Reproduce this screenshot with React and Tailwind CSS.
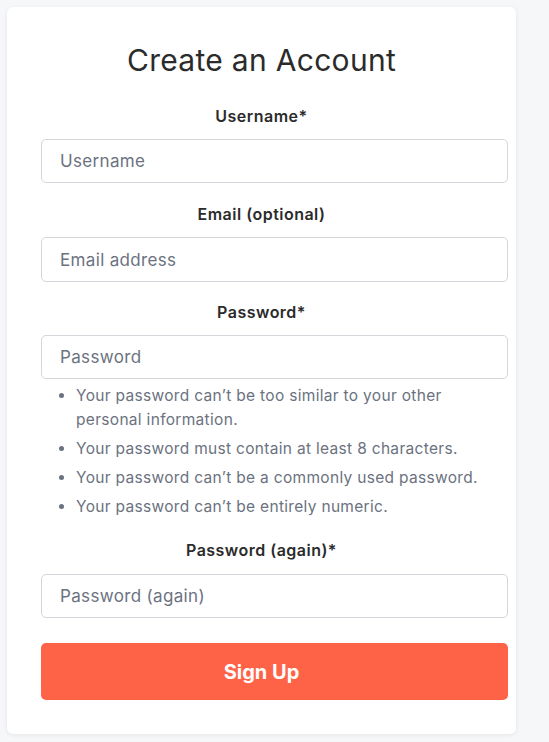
export default function App() {
  const font = { fontFamily: "Inter, 'Noto Sans', sans-serif" };
  const inputCls =
    "w-[467px] rounded-[5px] border border-[#d3d6db] px-[18px] text-[17px] tracking-[0.02em] text-[#374151] placeholder:text-[#6b7280] focus:outline-none";
  const labelCls =
    "text-center text-[16px] leading-6 font-semibold tracking-[0.03em] text-[#2b2b2b]";
  return (
    <div className="min-h-screen bg-[#f6f7f9] p-[7px]" style={font}>
      <div className="w-[509px] rounded-md bg-white px-[34px] pt-[35px] pb-[34px] shadow-[0_1px_4px_rgba(0,0,0,0.08)]">
        <h1 className="text-center text-[30px] leading-[36px] font-normal tracking-[0.01em] text-[#2b2b2b]">
          Create an Account
        </h1>

        <form className="mt-[26px] flex flex-col">
          {/* Username */}
          <label className={labelCls}>Username*</label>
          <input
            type="text"
            placeholder="Username"
            className={`mt-[11px] h-[44px] ${inputCls}`}
          />

          {/* Email */}
          <label className={`mt-[19px] ${labelCls}`}>Email (optional)</label>
          <input
            type="email"
            placeholder="Email address"
            className={`mt-[11px] h-[45px] ${inputCls}`}
          />

          {/* Password */}
          <label className={`mt-[18px] ${labelCls}`}>Password*</label>
          <input
            type="password"
            placeholder="Password"
            className={`mt-[11px] h-[44px] ${inputCls}`}
          />
          <ul className="mt-[5px] list-disc pl-[35px] text-[15.5px] leading-6 tracking-[0.02em] text-[#6b7280] marker:text-[#6b7280]">
            <li>Your password can’t be too similar to your other personal information.</li>
            <li className="mt-[5px]">Your password must contain at least 8 characters.</li>
            <li className="mt-[5px]">Your password can’t be a commonly used password.</li>
            <li className="mt-[5px]">Your password can’t be entirely numeric.</li>
          </ul>

          {/* Password again */}
          <label className={`mt-[19px] ${labelCls}`}>Password (again)*</label>
          <input
            type="password"
            placeholder="Password (again)"
            className={`mt-[12px] h-[44px] ${inputCls}`}
          />

          <button
            type="button"
            className="mt-[25px] h-[57px] w-[467px] rounded-[5px] bg-[#ff6347] pr-[26px] text-[20px] font-bold text-white"
          >
            Sign Up
          </button>
        </form>
      </div>
    </div>
  );
}
